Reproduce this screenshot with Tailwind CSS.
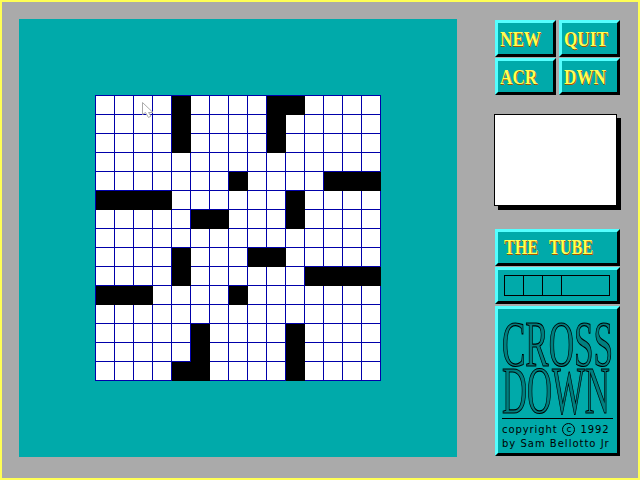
<!DOCTYPE html>
<html lang="en">
<head>
    <meta charset="UTF-8">
    <title>Cross Down</title>
    <script src="https://cdn.jsdelivr.net/npm/@tailwindcss/browser@4"></script>
</head>
<body class="w-[640px] h-[480px] overflow-hidden">

    <div class="w-[640px] h-[480px] border-2 border-[#ffff55] bg-[#aaaaaa] flex">

        <!-- board -->
        <div class="ml-[17px] mt-[17px] w-[438px] h-[438px] bg-[#00aaaa] flex items-center justify-center">
            <div class="relative">
                <div id="board" class="grid grid-cols-[repeat(15,19px)] grid-rows-[repeat(15,19px)] w-[286px] h-[286px] border-t border-l border-[#0000aa] bg-white"></div>
                <svg class="absolute left-[47px] top-[7px]" width="12" height="17" viewBox="0 0 12 17">
                    <path d="M.5.5V12.500L3.500 10.500 6.500 15.500 9 14 6.500 10.500H11z" fill="white" stroke="#aaaaaa"/>
                </svg>
            </div>
        </div>

        <!-- side panel -->
        <div class="ml-[38px] mt-[18px] w-[125px] flex flex-col">
            <div class="grid grid-cols-2 gap-x-[3px] gap-y-px font-['Liberation_Serif',serif] font-bold text-[22px] text-[#ffff55] [text-shadow:1px_1px_0_#aa5500]">
                <div class="h-[37px] border-[3px] border-t-[#55ffff] border-l-[#55ffff] border-r-black border-b-black bg-[#00aaaa] flex items-center pl-[2px] whitespace-nowrap"><span class="inline-block origin-left scale-x-[0.78]">NEW</span></div>
                <div class="h-[37px] border-[3px] border-t-[#55ffff] border-l-[#55ffff] border-r-black border-b-black bg-[#00aaaa] flex items-center pl-[2px] whitespace-nowrap"><span class="inline-block origin-left scale-x-[0.78]">QUIT</span></div>
                <div class="h-[37px] border-[3px] border-t-[#55ffff] border-l-[#55ffff] border-r-black border-b-black bg-[#00aaaa] flex items-center pl-[2px] whitespace-nowrap"><span class="inline-block origin-left scale-x-[0.78]">ACR</span></div>
                <div class="h-[37px] border-[3px] border-t-[#55ffff] border-l-[#55ffff] border-r-black border-b-black bg-[#00aaaa] flex items-center pl-[2px] whitespace-nowrap"><span class="inline-block origin-left scale-x-[0.78]">DWN</span></div>
            </div>

            <!-- clue box -->
            <div class="mt-[19px] -ml-px w-[123px] h-[92px] bg-white border border-black shadow-[4px_4px_0_#000]"></div>

            <div class="mt-[23px] h-[37px] border-[3px] border-t-[#55ffff] border-l-[#55ffff] border-r-black border-b-black bg-[#00aaaa] flex items-center pl-[6px] font-['Liberation_Serif',serif] font-bold text-[21px] whitespace-pre text-[#ffff55] [text-shadow:1px_1px_0_#aa5500]"><span class="inline-block origin-left scale-x-[0.77] [word-spacing:2px]">THE  TUBE</span></div>

            <div class="mt-px h-[37px] border-[3px] border-t-[#55ffff] border-l-[#55ffff] border-r-black border-b-black bg-[#00aaaa] flex items-center pl-[6px]">
                <div class="w-[106px] h-[21px] border border-black grid grid-cols-[19px_19px_19px_1fr]">
                    <div class="border-r border-black"></div>
                    <div class="border-r border-black"></div>
                    <div class="border-r border-black"></div>
                    <div></div>
                </div>
            </div>

            <div class="mt-[2px] h-[150px] border-[3px] border-t-[#55ffff] border-l-[#55ffff] border-r-black border-b-black bg-[#00aaaa] pl-[4px] overflow-hidden text-black">
                <div class="font-['Liberation_Serif',serif] text-[66px] leading-[46px] mt-[12px] origin-left scale-x-[0.53] whitespace-nowrap text-black/25 [-webkit-text-stroke:1.2px_#000]">CROSS</div>
                <div class="font-['Liberation_Serif',serif] text-[68px] leading-[46px] origin-left scale-x-[0.51] whitespace-nowrap text-black/25 [-webkit-text-stroke:1.2px_#000]">DOWN</div>
                <div class="mt-[5px] w-[111px] border-t border-black"></div>
                <div class="flex items-center h-[15px] mt-[3px] font-['DejaVu_Sans',sans-serif] text-[10px] tracking-[0.9px] whitespace-nowrap">
                    <span>copyright</span>
                    <span class="ml-[5px] w-[13px] h-[13px] rounded-full border border-black flex items-center justify-center text-[9px] tracking-normal">c</span>
                    <span class="ml-[5px]">1992</span>
                </div>
                <div class="font-['DejaVu_Sans',sans-serif] text-[10px] leading-[13px] tracking-[1px] whitespace-nowrap">by Sam Bellotto Jr</div>
            </div>
        </div>
    </div>

    <script>
        // # = black square
        const rows = [
            "....#....##....",
            "....#....#.....",
            "....#....#.....",
            "...............",
            ".......#....###",
            "####......#....",
            ".....##...#....",
            "...............",
            "....#...##.....",
            "....#......####",
            "###....#.......",
            "...............",
            ".....#....#....",
            ".....#....#....",
            "....##....#....",
        ];
        const board = document.getElementById('board');
        board.innerHTML = rows.map(r => [...r].map(c =>
            c === '#'
                ? '<div class="bg-black"></div>'
                : '<div class="border-r border-b border-[#0000aa]"></div>'
        ).join('')).join('');
    </script>

</body>
</html>
